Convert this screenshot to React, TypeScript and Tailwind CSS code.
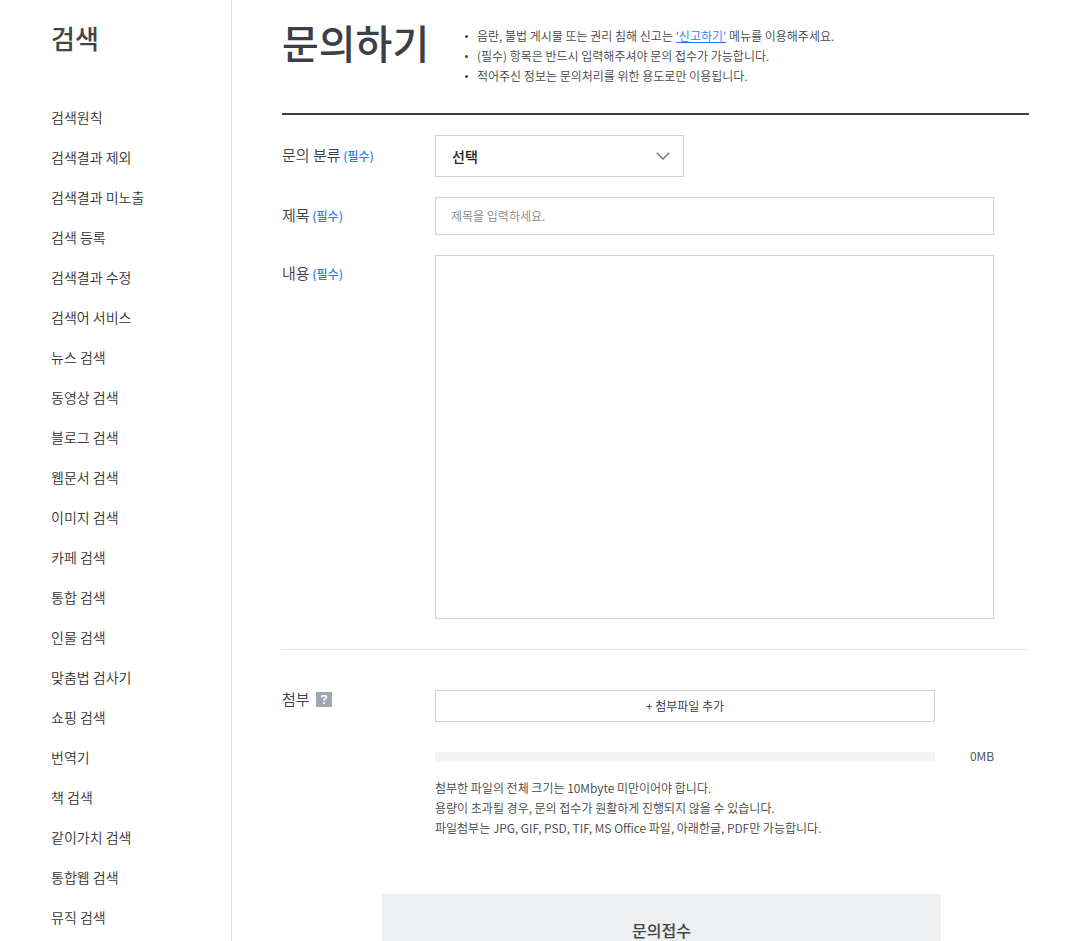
import { useState } from "react";

const menuItems = [
    "검색원칙",
    "검색결과 제외",
    "검색결과 미노출",
    "검색 등록",
    "검색결과 수정",
    "검색어 서비스",
    "뉴스 검색",
    "동영상 검색",
    "블로그 검색",
    "웹문서 검색",
    "이미지 검색",
    "카페 검색",
    "통합 검색",
    "인물 검색",
    "맞춤법 검사기",
    "쇼핑 검색",
    "번역기",
    "책 검색",
    "같이가치 검색",
    "통합웹 검색",
    "뮤직 검색",
];

function Required() {
    return <span className="text-xs font-medium text-[#1f7cff]"> (필수)</span>;
}

function Sidebar() {
    return (
        <aside className="w-[232px] shrink-0 border-r border-[#e1e1e1] pl-[51px]">
            <h2 className="pt-[18px] text-[26px] leading-10 font-medium text-[#444]">검색</h2>
            <nav className="mt-[39px]">
                <ul>
                    {menuItems.map((item) => (
                        <li key={item}>
                            <a href="#" className="block text-sm leading-10 text-[#333]">{item}</a>
                        </li>
                    ))}
                </ul>
            </nav>
        </aside>
    );
}

export default function App() {
    const [title, setTitle] = useState("");
    const [content, setContent] = useState("");

    return (
        <div className="flex min-h-screen bg-white font-['Noto_Sans_CJK_KR',sans-serif] font-[350] text-[#3c3e48]">
            <Sidebar />

            <main className="min-w-0 flex-1 pr-[49px] pl-[50px]">
                {/* Title and notices */}
                <header className="flex h-[115px] items-start border-b-2 border-[#3c3e48]">
                    <h1 className="w-[183px] shrink-0 pt-[14px] text-[40px] leading-[56px] font-medium text-[#3c3e48]">문의하기</h1>
                    <ul className="pt-[26px] text-xs leading-5 text-[#444]">
                        <li className="flex items-center gap-[9px] before:size-[3px] before:rounded-full before:bg-[#444]">
                            <span>
                                음란, 불법 게시물 또는 권리 침해 신고는{" "}
                                <a href="#" className="text-[#1f7cff] underline">'신고하기'</a> 메뉴를 이용해주세요.
                            </span>
                        </li>
                        <li className="flex items-center gap-[9px] before:size-[3px] before:rounded-full before:bg-[#444]">
                            (필수) 항목은 반드시 입력해주셔야 문의 접수가 가능합니다.
                        </li>
                        <li className="flex items-center gap-[9px] before:size-[3px] before:rounded-full before:bg-[#444]">
                            적어주신 정보는 문의처리를 위한 용도로만 이용됩니다.
                        </li>
                    </ul>
                </header>

                <form onSubmit={(e) => e.preventDefault()}>
                    {/* Inquiry fields */}
                    <div className="grid grid-cols-[153px_1fr] gap-y-5 border-b border-[#e5e5e5] pt-5 pr-[35px] pb-[30px]">
                        <label htmlFor="category" className="text-[15px] leading-10">
                            문의 분류<Required />
                        </label>
                        <div className="relative w-[249px]">
                            <select
                                id="category"
                                className="block h-[42px] w-full appearance-none border border-[#cfcfcf] bg-white px-4 text-sm font-medium text-[#222]"
                            >
                                <option>선택</option>
                            </select>
                            <svg
                                viewBox="0 0 14 8"
                                className="pointer-events-none absolute top-[17px] right-[14px] h-2 w-[14px]"
                                fill="none"
                                stroke="#666d78"
                                strokeWidth="1.3"
                            >
                                <path d="M.8.8 7 7 13.2.8" />
                            </svg>
                        </div>

                        <label htmlFor="title" className="text-[15px] leading-9">
                            제목<Required />
                        </label>
                        <input
                            id="title"
                            type="text"
                            value={title}
                            placeholder="제목을 입력하세요."
                            onChange={(e) => setTitle(e.target.value)}
                            className="h-[38px] w-full border border-[#cfcfcf] px-[15px] pb-[2px] text-xs placeholder:text-[#888]"
                        />

                        <label htmlFor="content" className="text-[15px] leading-9">
                            내용<Required />
                        </label>
                        <textarea
                            id="content"
                            value={content}
                            onChange={(e) => setContent(e.target.value)}
                            className="block h-[364px] w-full resize-none border border-[#cfcfcf] px-[15px] py-2 text-xs"
                        />
                    </div>

                    {/* Attachments */}
                    <div className="grid grid-cols-[153px_1fr] pt-10 pr-[35px]">
                        <div className="flex h-[18px] items-center gap-[6px] text-[15px]">
                            <span>첨부</span>
                            <button type="button" aria-label="첨부 도움말">
                                <svg viewBox="0 0 16 15" className="h-[15px] w-4">
                                    <rect width="16" height="15" rx="1" fill="#9fa5b2" />
                                    <path d="M5.8 5.4V4.2L6.6 3.8H9.4L10.2 4.6V5.8L8 7.6V9M8 10.2V12" fill="none" stroke="#fff" strokeWidth="1.7" />
                                </svg>
                            </button>
                        </div>
                        <div>
                            <button type="button" className="block h-8 w-[calc(100%-59px)] border border-[#cfcfcf] text-xs text-[#333]">
                                + 첨부파일 추가
                            </button>
                            <div className="mt-6 flex h-5 items-center">
                                <div className="h-[9px] flex-1 bg-[#f3f3f3]" />
                                <span className="w-[59px] text-right text-xs text-[#444]">0MB</span>
                            </div>
                            <p className="mt-3 text-xs leading-5 text-[#444]">
                                첨부한 파일의 전체 크기는 10Mbyte 미만이어야 합니다.<br />
                                용량이 초과될 경우, 문의 접수가 원활하게 진행되지 않을 수 있습니다.<br />
                                파일첨부는 JPG, GIF, PSD, TIF, MS Office 파일, 아래한글, PDF만 가능합니다.
                            </p>
                        </div>
                    </div>

                    <div className="mt-14 pr-[88px] pl-[100px]">
                        <button type="submit" className="h-[72px] w-full bg-[#eeeff1] text-base font-medium text-[#444]">
                            문의접수
                        </button>
                    </div>
                </form>
            </main>
        </div>
    );
}
